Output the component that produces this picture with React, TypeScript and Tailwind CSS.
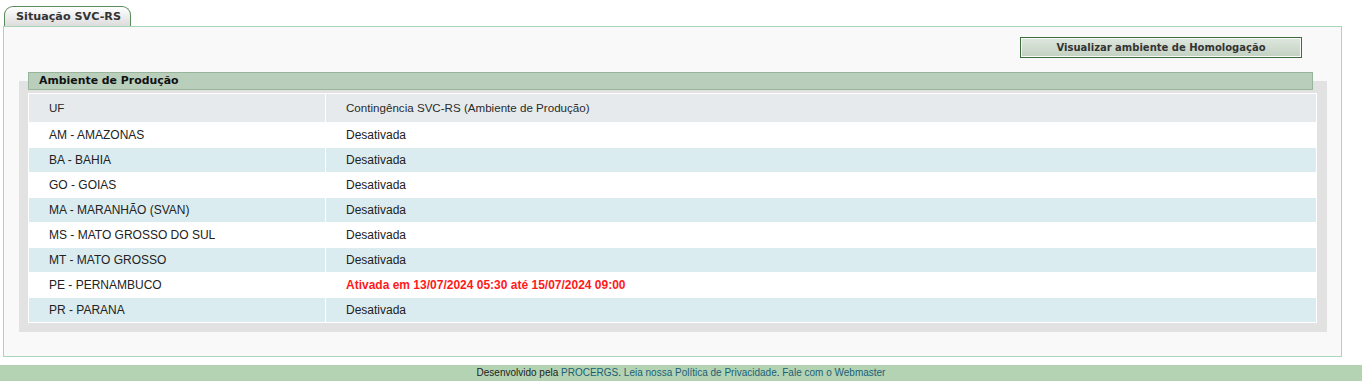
import React from "react";

const rows: { uf: string; status: string; active?: boolean }[] = [
  { uf: "AM - AMAZONAS", status: "Desativada" },
  { uf: "BA - BAHIA", status: "Desativada" },
  { uf: "GO - GOIAS", status: "Desativada" },
  { uf: "MA - MARANHÃO (SVAN)", status: "Desativada" },
  { uf: "MS - MATO GROSSO DO SUL", status: "Desativada" },
  { uf: "MT - MATO GROSSO", status: "Desativada" },
  { uf: "PE - PERNAMBUCO", status: "Ativada em 13/07/2024 05:30 até 15/07/2024 09:00", active: true },
  { uf: "PR - PARANA", status: "Desativada" },
];

export default function App() {
  return (
    <div className="w-[1362px] h-[381px] bg-white overflow-hidden font-['Liberation_Sans',Arial,sans-serif]">
      <div className="pt-[6px] pl-[4px]">
        <div className="w-[127px] h-[20px] rounded-t-[9px] border border-b-0 border-[#5b8a5b] bg-gradient-to-b from-[#ffffff] to-[#dcdcdc] flex items-center justify-center pl-[2px] font-['DejaVu_Sans',Verdana,sans-serif] font-bold text-[11.2px] text-[#333] leading-none">
          Situação SVC-RS
        </div>
      </div>
      <div className="ml-[3px] w-[1339px] h-[331px] border border-[#a9d6b9] bg-[#f9f9f9] flex flex-col">
        <div className="flex justify-end pr-[39px] pt-[10px]">
          <div className="w-[282px] h-[21px] border border-[#3c6b3c] p-px">
            <div className="w-full h-full bg-gradient-to-b from-[#dde6dd] to-[#c3d2c3] flex items-center justify-center font-['DejaVu_Sans',Verdana,sans-serif] font-bold text-[10px] text-[#333] leading-none">
              Visualizar ambiente de Homologação
            </div>
          </div>
        </div>
        <div className="ml-[15px] mt-[23px] w-[1308px] h-[251px] bg-[#e2e2e2] px-[9px] pb-[9px]">
          <div className="-mt-[9px] w-[1285px] h-[18px] border border-[#98b59b] bg-[#b9cfbb] flex items-center pl-[10px] font-['DejaVu_Sans',Verdana,sans-serif] font-bold text-[10.9px] text-[#111] leading-none">
            Ambiente de Produção
          </div>
          <table className="mt-[3px] w-[1289px] border-collapse bg-white text-[12px] text-[#222]">
            <thead>
              <tr className="h-[29px] bg-[#e6eaed] text-[11.6px] text-[#2a2a2a]">
                <th className="w-[297px] border border-white text-left font-normal pl-[20px]">UF</th>
                <th className="border border-white text-left font-normal pl-[20px]">Contingência SVC-RS (Ambiente de Produção)</th>
              </tr>
            </thead>
            <tbody>
              {rows.map((r, i) => (
                <tr key={r.uf} className={i % 2 === 0 ? "h-[25px] bg-white" : "h-[25px] bg-[#dbecf0]"}>
                  <td className="border border-white pl-[20px]">{r.uf}</td>
                  <td className={r.active ? "border border-white pl-[20px] text-[#ff1a1a] font-bold" : "border border-white pl-[20px]"}>
                    {r.status}
                  </td>
                </tr>
              ))}
            </tbody>
          </table>
        </div>
      </div>
      <div className="mt-[8px] h-[16px] bg-[#b3d3b3] flex items-center justify-center text-[10px] text-[#222] leading-none">
        <span>
          Desenvolvido pela <span className="text-[#1b5e78]">PROCERGS</span>.{" "}
          <span className="text-[#1b5e78]">Leia nossa Política de Privacidade</span>.{" "}
          <span className="text-[#1b5e78]">Fale com o Webmaster</span>
        </span>
      </div>
    </div>
  );
}
